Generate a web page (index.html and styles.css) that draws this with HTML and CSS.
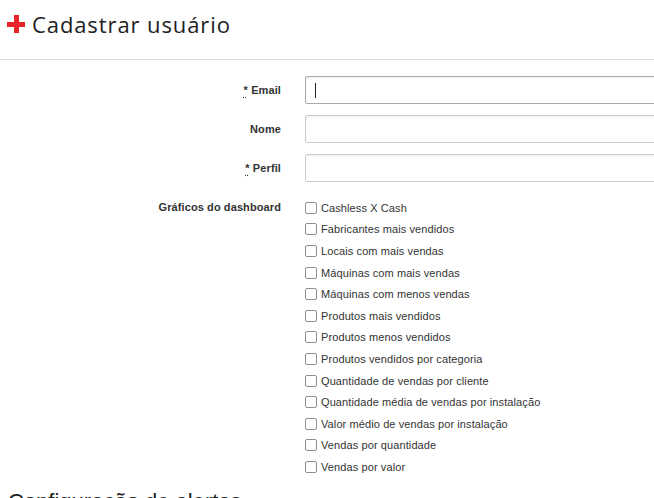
FILE: index.html
```html
<!DOCTYPE html>
<html lang="pt-BR">
<head>
  <meta charset="UTF-8">
  <title>Cadastrar usuário</title>
  <link rel="stylesheet" href="styles.css">
</head>
<body>

  <header class="page-header">
    <h1><span class="plus"></span>Cadastrar usuário</h1>
  </header>

  <form class="user-form">
    <label class="field-label" for="email"><abbr title="obrigatório">*</abbr> Email</label>
    <span class="field-wrap caret"><input class="field-input focused" id="email" type="text"></span>

    <label class="field-label" for="nome">Nome</label>
    <span class="field-wrap"><input class="field-input" id="nome" type="text"></span>

    <label class="field-label" for="perfil"><abbr title="obrigatório">*</abbr> Perfil</label>
    <span class="field-wrap"><input class="field-input" id="perfil" type="text"></span>

    <span class="field-label group-label">Gráficos do dashboard</span>
    <ul class="checks">
      <li><label><input type="checkbox"> Cashless X Cash</label></li>
      <li><label><input type="checkbox"> Fabricantes mais vendidos</label></li>
      <li><label><input type="checkbox"> Locais com mais vendas</label></li>
      <li><label><input type="checkbox"> Máquinas com mais vendas</label></li>
      <li><label><input type="checkbox"> Máquinas com menos vendas</label></li>
      <li><label><input type="checkbox"> Produtos mais vendidos</label></li>
      <li><label><input type="checkbox"> Produtos menos vendidos</label></li>
      <li><label><input type="checkbox"> Produtos vendidos por categoria</label></li>
      <li><label><input type="checkbox"> Quantidade de vendas por cliente</label></li>
      <li><label><input type="checkbox"> Quantidade média de vendas por instalação</label></li>
      <li><label><input type="checkbox"> Valor médio de vendas por instalação</label></li>
      <li><label><input type="checkbox"> Vendas por quantidade</label></li>
      <li><label><input type="checkbox"> Vendas por valor</label></li>
    </ul>
  </form>

  <h2 class="section-title">Configuração de alertas</h2>

</body>
</html>
```

FILE: styles.css
```css
html, body {
  margin: 0;
  overflow: hidden;
  background: #fff;
  color: #333;
  font-family: "Liberation Sans", Arial, sans-serif;
}

.page-header {
  box-sizing: border-box;
  height: 60px;
  border-bottom: 1px solid #ddd;
  display: flex;
  align-items: center;
  padding: 0 0 12px 7px;
}

.page-header h1 {
  margin: 0;
  display: flex;
  align-items: center;
  font-family: "Open Sans", sans-serif;
  font-weight: 400;
  font-size: 22px;
  color: #222;
  letter-spacing: 0.9px;
}

.plus {
  position: relative;
  width: 18px;
  height: 18px;
  margin-right: 7px;
}
.plus::before,
.plus::after {
  content: "";
  position: absolute;
  background: #e8242b;
}
.plus::before {
  left: 0;
  top: 7px;
  width: 18px;
  height: 5px;
}
.plus::after {
  left: 7px;
  top: 0;
  width: 5px;
  height: 18px;
}

.user-form {
  display: grid;
  grid-template-columns: 281px 500px;
  column-gap: 24px;
  row-gap: 11px;
  padding-top: 16px;
  overflow: hidden;
}

.field-label {
  text-align: right;
  font-size: 11px;
  font-weight: bold;
  line-height: 28px;
  color: #333;
  letter-spacing: 0.1px;
}

.field-label abbr {
  text-decoration: underline dotted;
  text-underline-offset: 3px;
}

.field-wrap {
  position: relative;
  display: block;
}

.field-wrap.caret::after {
  content: "";
  position: absolute;
  left: 10px;
  top: 7px;
  width: 1px;
  height: 15px;
  background: #222;
}

.field-input {
  display: block;
  width: 100%;
  height: 28px;
  box-sizing: border-box;
  border: 1px solid #ccc;
  border-radius: 2px;
  box-shadow: inset 0 1px 2px rgba(0,0,0,0.08);
  padding: 0 9px;
  font-size: 14px;
  color: #222;
}
.field-input:focus {
  outline: none;
}
.field-input.focused {
  border-color: #aaa;
}

.group-label {
  margin-top: 4px;
  line-height: 21.6px;
}

.checks {
  margin: 4px 0 0;
  padding: 0;
  list-style: none;
}

.checks li {
  height: 21.6px;
  display: flex;
  align-items: center;
  font-size: 11px;
  letter-spacing: 0.1px;
}

.checks label {
  display: flex;
  align-items: center;
  gap: 4px;
}

.checks input {
  appearance: none;
  box-sizing: border-box;
  width: 12px;
  height: 12px;
  margin: 0;
  border: 1px solid #8f8f8f;
  border-radius: 2px;
  background: #fff;
}

.section-title {
  margin: 11px 0 0 8px;
  font-size: 22px;
  font-weight: normal;
  color: #222;
}
```
